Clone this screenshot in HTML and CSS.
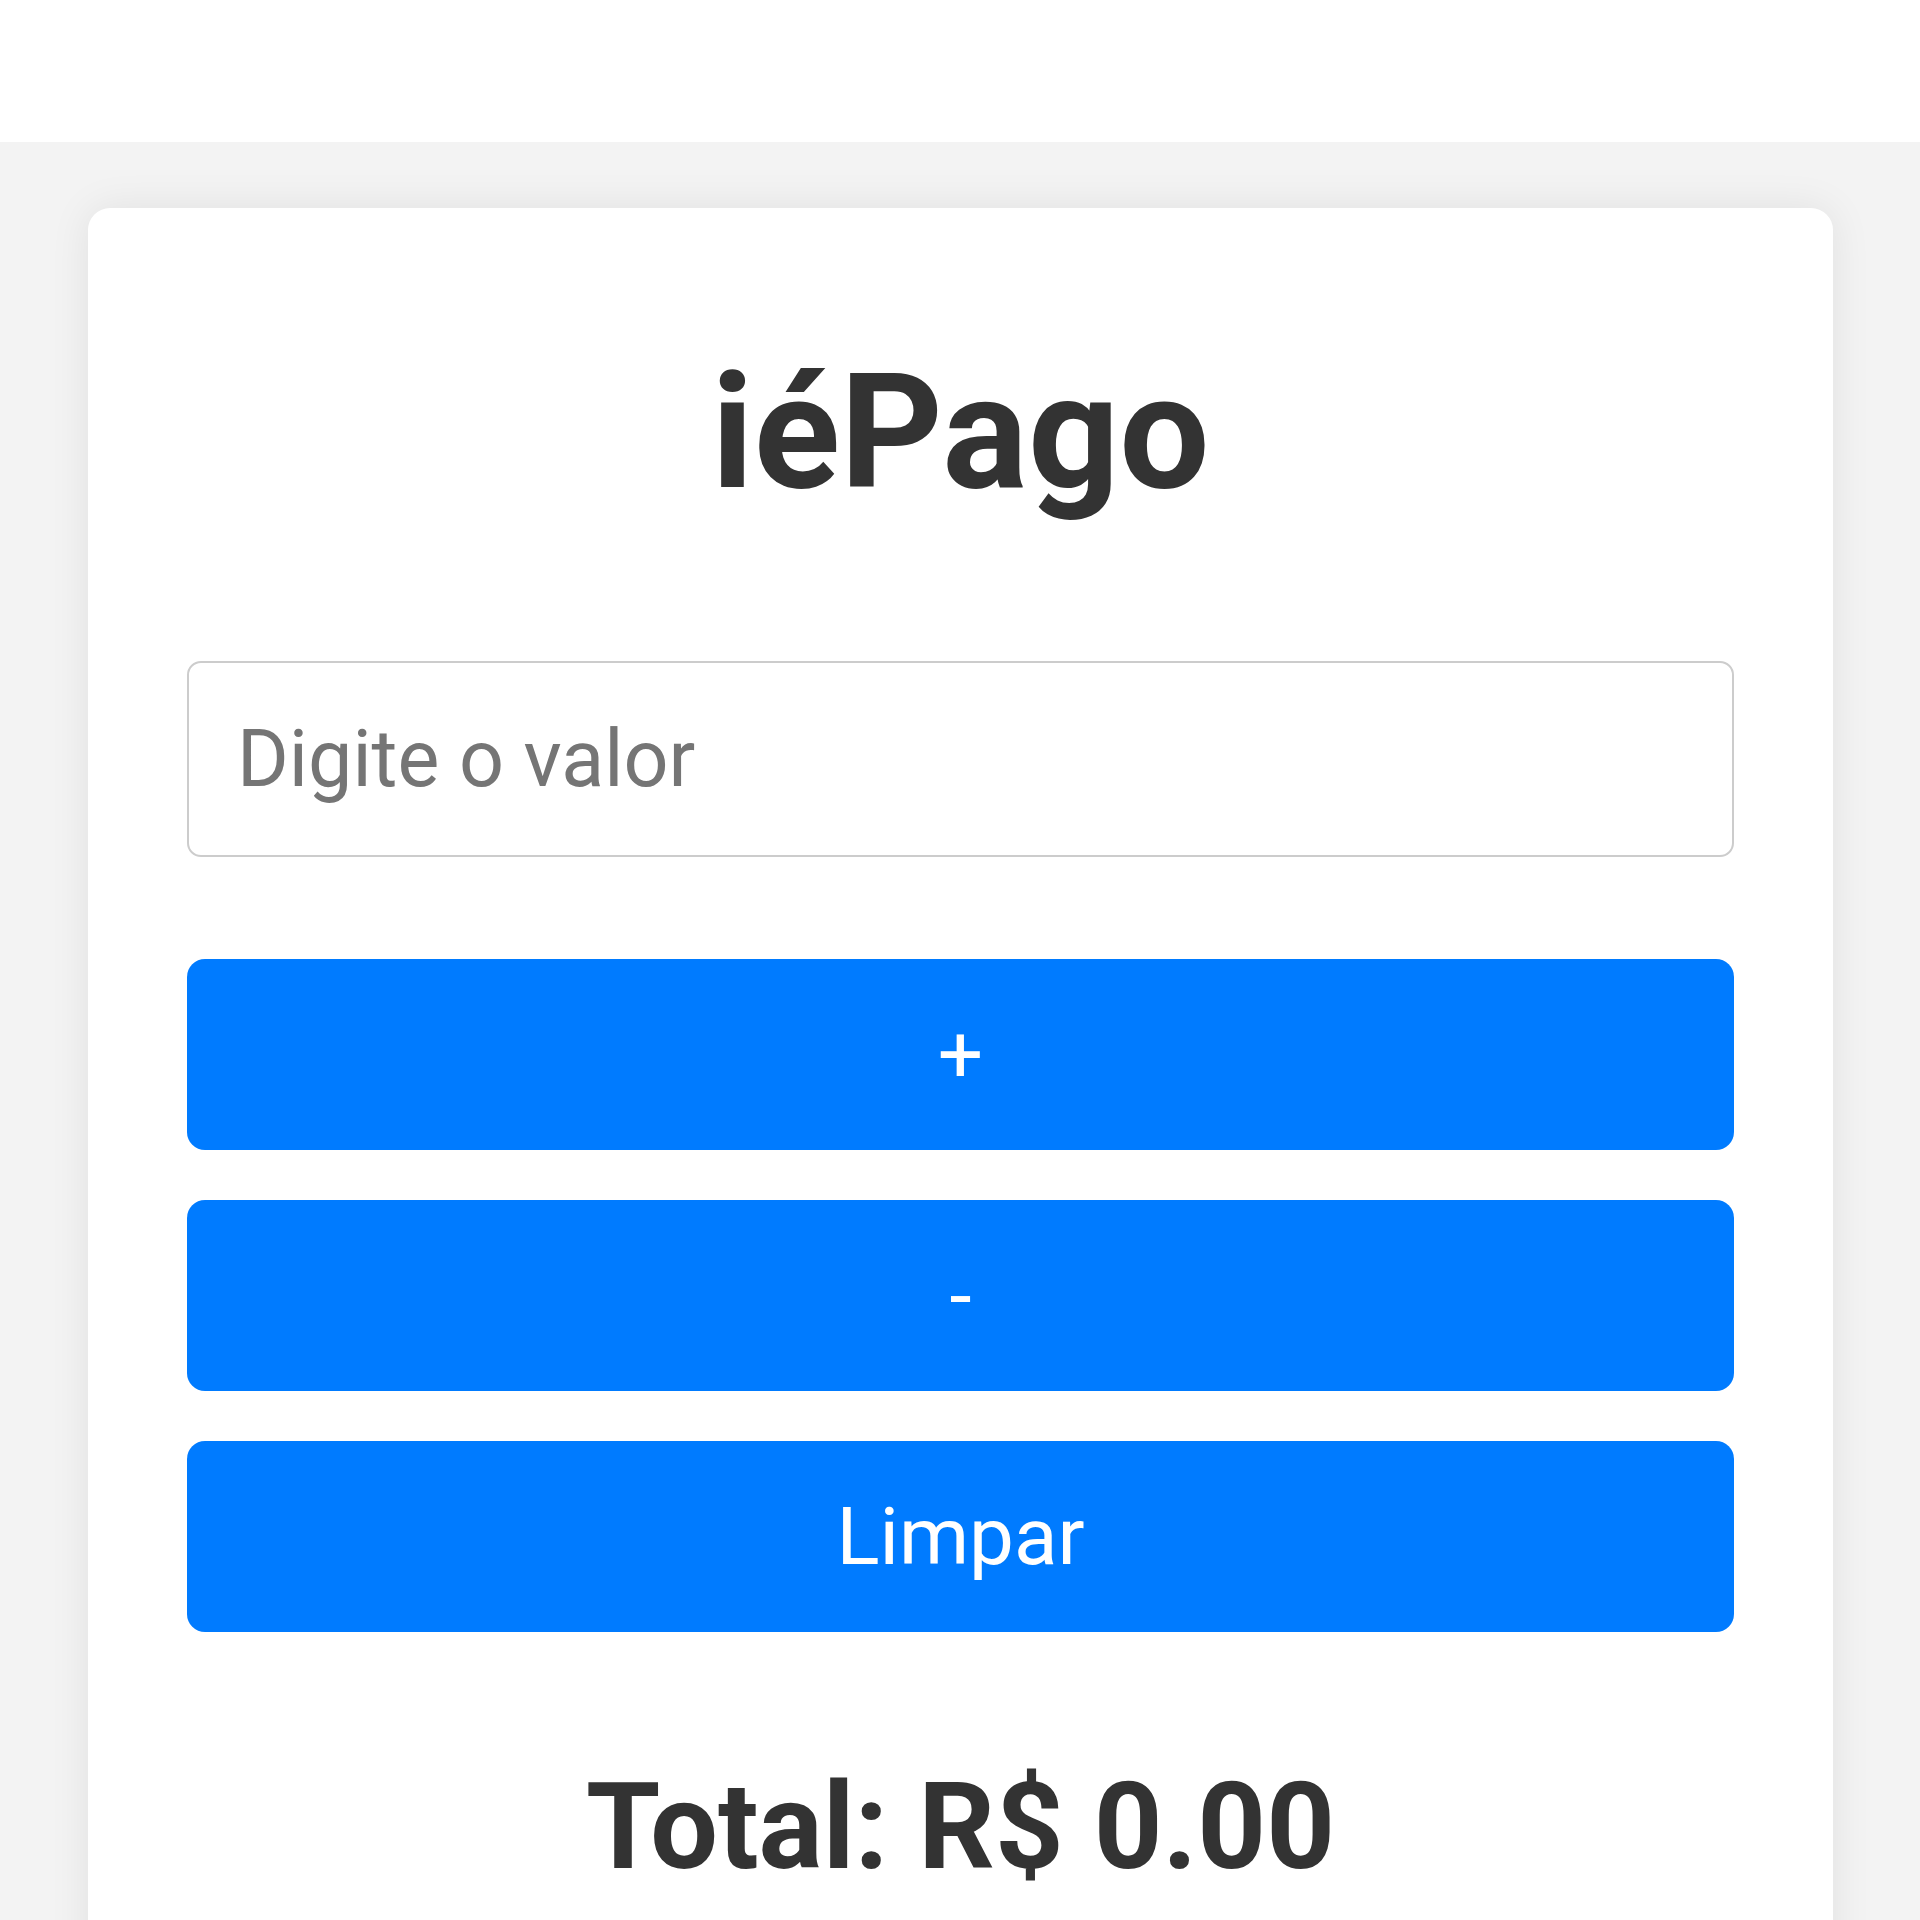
FILE: index.html
```html
<!DOCTYPE html>
<html lang="pt-BR">
<head>
<meta charset="utf-8">
<title>iéPago</title>
<link rel="stylesheet" href="styles.css">
</head>
<body>
<header class="topbar"></header>
<main class="page">
  <section class="card">
    <h1 class="title">iéPago</h1>
    <input class="amount" type="text" placeholder="Digite o valor">
    <div class="actions">
      <button class="btn">+</button>
      <button class="btn">-</button>
      <button class="btn">Limpar</button>
    </div>
    <p class="total">Total: R$ 0.00</p>
  </section>
</main>
</body>
</html>
```
FILE: styles.css
```css
* { box-sizing: border-box; }
html, body {
  margin: 0;
  padding: 0;
  background: #ffffff;
  font-family: Roboto, "Liberation Sans", Arial, sans-serif;
}
.topbar {
  height: 142px;
  background: #ffffff;
}
.page {
  background: #f3f3f3;
  padding: 66px 87px 120px 88px;
  min-height: 1800px;
}
.card {
  background: #ffffff;
  border-radius: 22px;
  box-shadow: 0 0 40px rgba(0, 0, 0, 0.08);
  padding: 100px 99px 100px 99px;
  display: flex;
  flex-direction: column;
  align-items: stretch;
}
.title {
  margin: 31px 0 135px;
  text-align: center;
  font-size: 160px;
  font-weight: 700;
  line-height: normal;
  color: #333333;
}
.amount {
  display: block;
  width: 100%;
  height: 196px;
  border: 2px solid #cccccc;
  border-radius: 14px;
  padding: 0 48px;
  font-family: Roboto, "Liberation Sans", Arial, sans-serif;
  font-size: 79px;
  color: #333333;
  background: #ffffff;
  margin: 0 0 102px;
  outline: none;
}
.amount::placeholder {
  color: #757575;
  opacity: 1;
}
.actions {
  display: flex;
  flex-direction: column;
  gap: 50px;
}
.btn {
  display: block;
  width: 100%;
  height: 191px;
  border: none;
  border-radius: 18px;
  background: #007bff;
  color: #ffffff;
  font-family: Roboto, "Liberation Sans", Arial, sans-serif;
  font-size: 80px;
  font-weight: 400;
  padding: 0;
}
.total {
  margin: 125px 0 0;
  text-align: center;
  font-size: 120px;
  font-weight: 700;
  line-height: normal;
  color: #333333;
}
```
